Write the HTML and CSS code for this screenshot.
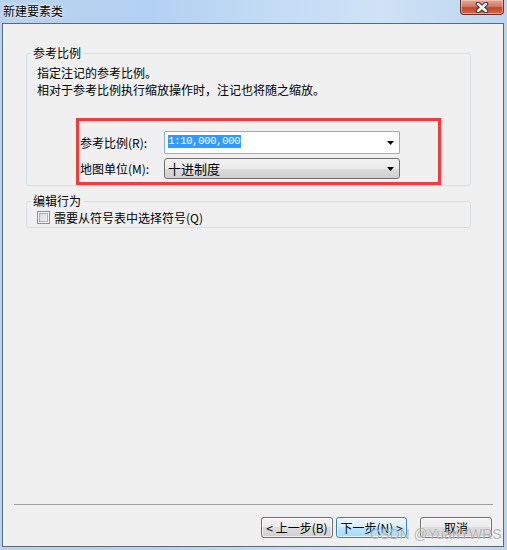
FILE: index.html
```html
<!DOCTYPE html>
<html lang="zh-CN">
<head>
    <meta charset="UTF-8">
    <title>新建要素类</title>
    <link rel="stylesheet" href="styles.css">
</head>
<body>

<div class="window">
    <div class="titlebar">
        <div class="title">新建要素类</div>
        <div class="close">
            <svg width="18" height="11" viewBox="0 0 18 11">
                <path d="M5 2 L13 9 M13 2 L5 9" stroke="#3b3b3b" stroke-width="4.5" stroke-linecap="round"/>
                <path d="M5 2 L13 9 M13 2 L5 9" stroke="#ffffff" stroke-width="2.4" stroke-linecap="round"/>
            </svg>
        </div>
    </div>

    <div class="client">
        <fieldset class="group">
            <legend>参考比例</legend>
            <div class="desc">
                <div>指定注记的参考比例。</div>
                <div>相对于参考比例执行缩放操作时，注记也将随之缩放。</div>
            </div>
            <div class="mark">
                <div class="field-row">
                    <label>参考比例(R):</label>
                    <div class="combo combo-edit">
                        <span class="selected">1:10,000,000</span>
                        <svg class="arrow" width="7" height="4" viewBox="0 0 7 4"><path d="M0 0 H7 L3.5 4 Z" fill="#000"/></svg>
                    </div>
                </div>
                <div class="field-row">
                    <label>地图单位(M):</label>
                    <div class="combo combo-list">
                        <span>十进制度</span>
                        <svg class="arrow" width="7" height="4" viewBox="0 0 7 4"><path d="M0 0 H7 L3.5 4 Z" fill="#000"/></svg>
                    </div>
                </div>
            </div>
        </fieldset>

        <fieldset class="group group-edit">
            <legend>编辑行为</legend>
            <div class="check-row">
                <span class="check"></span>
                <span>需要从符号表中选择符号(Q)</span>
            </div>
        </fieldset>

        <div class="spacer"></div>
        <div class="separator"></div>

        <div class="buttons">
            <button class="btn btn-back">&lt; 上一步(B)</button>
            <button class="btn btn-next">下一步(N) &gt;</button>
            <button class="btn btn-cancel">取消</button>
        </div>
    </div>

    <div class="watermark">CSDN @YuanYWRS</div>
</div>

</body>
</html>
```

FILE: styles.css
```css
body {
    margin: 0;
    width: 507px;
    height: 550px;
    overflow: hidden;
    font-family: "Noto Sans CJK SC", "Liberation Sans", sans-serif;
    font-size: 12px;
    color: #000;
}

.window {
    position: relative;
    width: 507px;
    height: 550px;
    display: flex;
    flex-direction: column;
    background: linear-gradient(to right, #b9d3ee 0%, #b3d1f3 30%, #c4dcf5 55%, #cfe2f6 75%, #bcd5ef 100%);
}

.titlebar {
    height: 23px;
    display: flex;
    justify-content: space-between;
    align-items: flex-start;
}

.title {
    padding-left: 3px;
    line-height: 22px;
    font-size: 12px;
    text-shadow: 0 0 4px #fff, 0 0 2px #fff;
}

.close {
    width: 44px;
    height: 15px;
    margin-right: 3px;
    box-sizing: border-box;
    border: 1px solid #6e2e26;
    border-top: none;
    border-radius: 0 0 4px 4px;
    background: linear-gradient(to bottom, #e7a597 0%, #d47b69 45%, #c2462f 55%, #cf6a4f 100%);
    display: flex;
    justify-content: center;
    align-items: center;
    box-shadow: inset 0 0 0 1px rgba(255, 220, 210, 0.5);
}

.client {
    flex: 1;
    margin: 0 3px 3px 2px;
    border: 1px solid #5d6977;
    background: #f0f0f0;
    display: flex;
    flex-direction: column;
}

.group {
    margin: 21px 32px 0 23px;
    padding: 0;
    border: 1px solid #d5dfe5;
    border-radius: 3px;
    min-width: 0;
}

.group legend {
    margin-left: 4px;
    padding: 0 2px;
    line-height: 16px;
}

.desc {
    margin-top: 3px;
    padding-left: 10px;
    line-height: 17px;
}

.mark {
    margin: 20px 29px 0 49px;
    border: 3px solid #f23b3b;
    padding: 10px 0 3px 1px;
    display: flex;
    flex-direction: column;
    gap: 4px;
}

.field-row {
    display: flex;
    align-items: center;
}

.field-row label {
    width: 84px;
    line-height: 16px;
}

.combo {
    width: 236px;
    box-sizing: border-box;
    display: flex;
    align-items: center;
    justify-content: space-between;
    padding: 0 5px 0 3px;
}

.combo-edit {
    height: 23px;
    border: 1px solid #7eb4ea;
    background: #fff;
    border-radius: 1px;
}

.combo-edit .selected {
    background: #3399ff;
    color: #fff;
    font-family: "Liberation Mono", monospace;
    font-size: 11px;
    letter-spacing: -0.6px;
    line-height: 13px;
    padding-right: 1px;
    margin-top: -3px;
}

.combo-list {
    height: 21px;
    border: 1px solid #707070;
    border-radius: 3px;
    background: linear-gradient(to bottom, #f2f2f2 0%, #ebebeb 50%, #dddddd 50%, #cfcfcf 100%);
    font-size: 13px;
}

.group-edit {
    margin-top: 7px;
    padding-bottom: 2px;
}

.check-row {
    display: flex;
    align-items: center;
    gap: 4px;
    padding-left: 10px;
    height: 16px;
}

.check {
    width: 13px;
    height: 13px;
    box-sizing: border-box;
    border: 1px solid #8e8f8f;
    background: linear-gradient(135deg, #cbcfd5 0%, #e8eaec 60%, #f6f6f6 100%);
    box-shadow: inset 0 0 0 1px #f4f4f4, inset 0 0 0 2px #aeb3b9;
}

.spacer {
    flex: 1;
}

.separator {
    height: 1px;
    margin: 0 10px 0 11px;
    background: #a0a0a0;
}

.buttons {
    display: flex;
    justify-content: flex-end;
    margin: 12px 11px 8px 0;
}

.btn {
    height: 21px;
    box-sizing: border-box;
    padding: 0;
    border: 1px solid #707070;
    border-radius: 3px;
    background: linear-gradient(to bottom, #f2f2f2 0%, #ebebeb 50%, #dddddd 50%, #cfcfcf 100%);
    font-family: "Noto Sans CJK SC", "Liberation Sans", sans-serif;
    font-size: 12px;
    line-height: 17px;
    color: #000;
    box-shadow: inset 0 0 0 1px rgba(255, 255, 255, 0.7);
}

.btn-back {
    width: 72px;
}

.btn-next {
    width: 71px;
    margin-left: 3px;
    border-color: #3c7fb1;
    background: linear-gradient(to bottom, #eaf6fd 0%, #d9f0fc 50%, #bee6fd 50%, #a7d9f5 100%);
}

.btn-cancel {
    width: 72px;
    margin-left: 13px;
}

.watermark {
    position: absolute;
    left: 370px;
    top: 526px;
    white-space: nowrap;
    font-family: "Liberation Sans", sans-serif;
    font-size: 14px;
    color: rgba(130, 130, 130, 0.6);
    text-shadow: 0 0 1px rgba(255, 255, 255, 0.9);
}
```
